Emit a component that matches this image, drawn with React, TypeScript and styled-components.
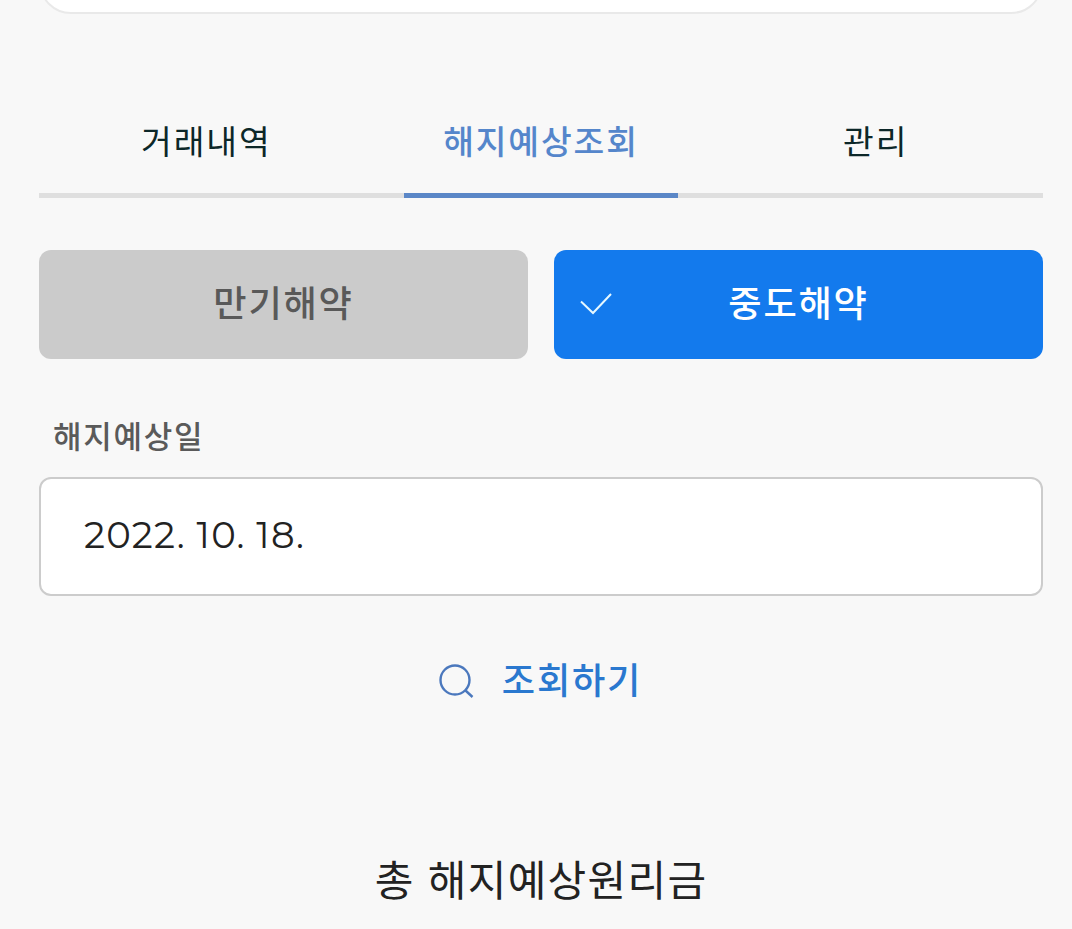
import React from "react";
import styled, { createGlobalStyle } from "styled-components";

const Global = createGlobalStyle`
  * { box-sizing: border-box; }
  body {
    margin: 0;
    background: #f8f8f8;
    font-family: "Noto Sans CJK KR", "Noto Sans", sans-serif;
  }
  button { font-family: inherit; border: 0; padding: 0; }
`;

const Page = styled.main`
  height: 929px;
  overflow: hidden;
  padding: 0 29px 0 39px;
  background: #f8f8f8;
  display: flex;
  flex-direction: column;
`;

const Card = styled.div`
  margin-top: -66px;
  height: 80px;
  flex: none;
  background: #fff;
  border: 2px solid #e9e9e9;
  border-radius: 32px;
`;

const Tabs = styled.nav`
  margin-top: 70px;
  height: 114px;
  flex: none;
  display: grid;
  grid-template-columns: repeat(3, 1fr);
  box-shadow: inset 0 -5px #dfdfdf;
`;

const Tab = styled.button<{ $active?: boolean }>`
  position: relative;
  background: none;
  padding-bottom: 4px;
  color: ${(p) => (p.$active ? "#5586cb" : "#0c2728")};
  font-size: 33.4px;
  font-weight: ${(p) => (p.$active ? 500 : 400)};
  letter-spacing: 1.9px;

  &::after {
    content: "";
    display: ${(p) => (p.$active ? "block" : "none")};
    position: absolute;
    left: 30px;
    right: 30px;
    bottom: 0;
    height: 5px;
    background: #5b87c7;
  }
`;

const Choices = styled.div`
  margin-top: 52px;
  display: grid;
  grid-template-columns: 1fr 1fr;
  gap: 26px;
`;

const Choice = styled.button<{ $active?: boolean }>`
  position: relative;
  height: 109px;
  padding-bottom: 8px;
  border-radius: 12px;
  background: ${(p) => (p.$active ? "#137aed" : "#cbcbcb")};
  color: ${(p) => (p.$active ? "#fff" : "#595959")};
  font-size: 36.2px;
  font-weight: 500;
  letter-spacing: 1.8px;
`;

const Check = styled.svg`
  position: absolute;
  left: 26px;
  top: 42px;
`;

const Label = styled.label`
  margin: 53px 0 0 14px;
  height: 49px;
  line-height: 46px;
  font-size: 31px;
  font-weight: 500;
  letter-spacing: 1.7px;
  color: #5a5a5a;
`;

const DateField = styled.div`
  margin-top: 16px;
  height: 119px;
  flex: none;
  display: flex;
  align-items: center;
  padding: 0 43px 4px;
  border: 2px solid #cccccc;
  border-radius: 12px;
  background: #fff;
  color: #222;
`;

const DateText = styled.span`
  font-family: "Montserrat", "Inter", sans-serif;
  font-size: 37px;
  letter-spacing: 1.2px;
`;

const Search = styled.button`
  margin-top: 50px;
  height: 70px;
  display: flex;
  justify-content: center;
  align-items: center;
  gap: 27px;
  background: none;
  color: #2a78cf;
  font-size: 36.2px;
  font-weight: 500;
  letter-spacing: 1.8px;
`;

const SearchText = styled.span`
  padding: 0 1px 7px 0;
`;

const Total = styled.h2`
  margin: 132px 0 0;
  line-height: 60px;
  text-align: center;
  font-size: 42px;
  font-weight: 400;
  letter-spacing: 1.3px;
  word-spacing: 2.5px;
  color: #222;
`;

export default function App() {
  return (
    <>
      <Global />
      <Page>
        <Card />
        <Tabs>
          <Tab>거래내역</Tab>
          <Tab $active>해지예상조회</Tab>
          <Tab>관리</Tab>
        </Tabs>
        <Choices>
          <Choice>만기해약</Choice>
          <Choice $active>
            <Check width="32" height="24" viewBox="0 0 32 24" fill="none" stroke="#e6f8ff" strokeWidth="2">
              <path d="M1 9.5 13 21 31 2" />
            </Check>
            중도해약
          </Choice>
        </Choices>
        <Label>해지예상일</Label>
        <DateField><DateText>2022. 10. 18.</DateText></DateField>
        <Search>
          <svg width="36" height="36" viewBox="0 0 36 36" fill="none" stroke="#4b78bd" strokeWidth="2.4">
            <circle cx="16" cy="17" r="14.5" />
            <path d="m26 27 7.5 7" />
          </svg>
          <SearchText>조회하기</SearchText>
        </Search>
        <Total>총 해지예상원리금</Total>
      </Page>
    </>
  );
}
